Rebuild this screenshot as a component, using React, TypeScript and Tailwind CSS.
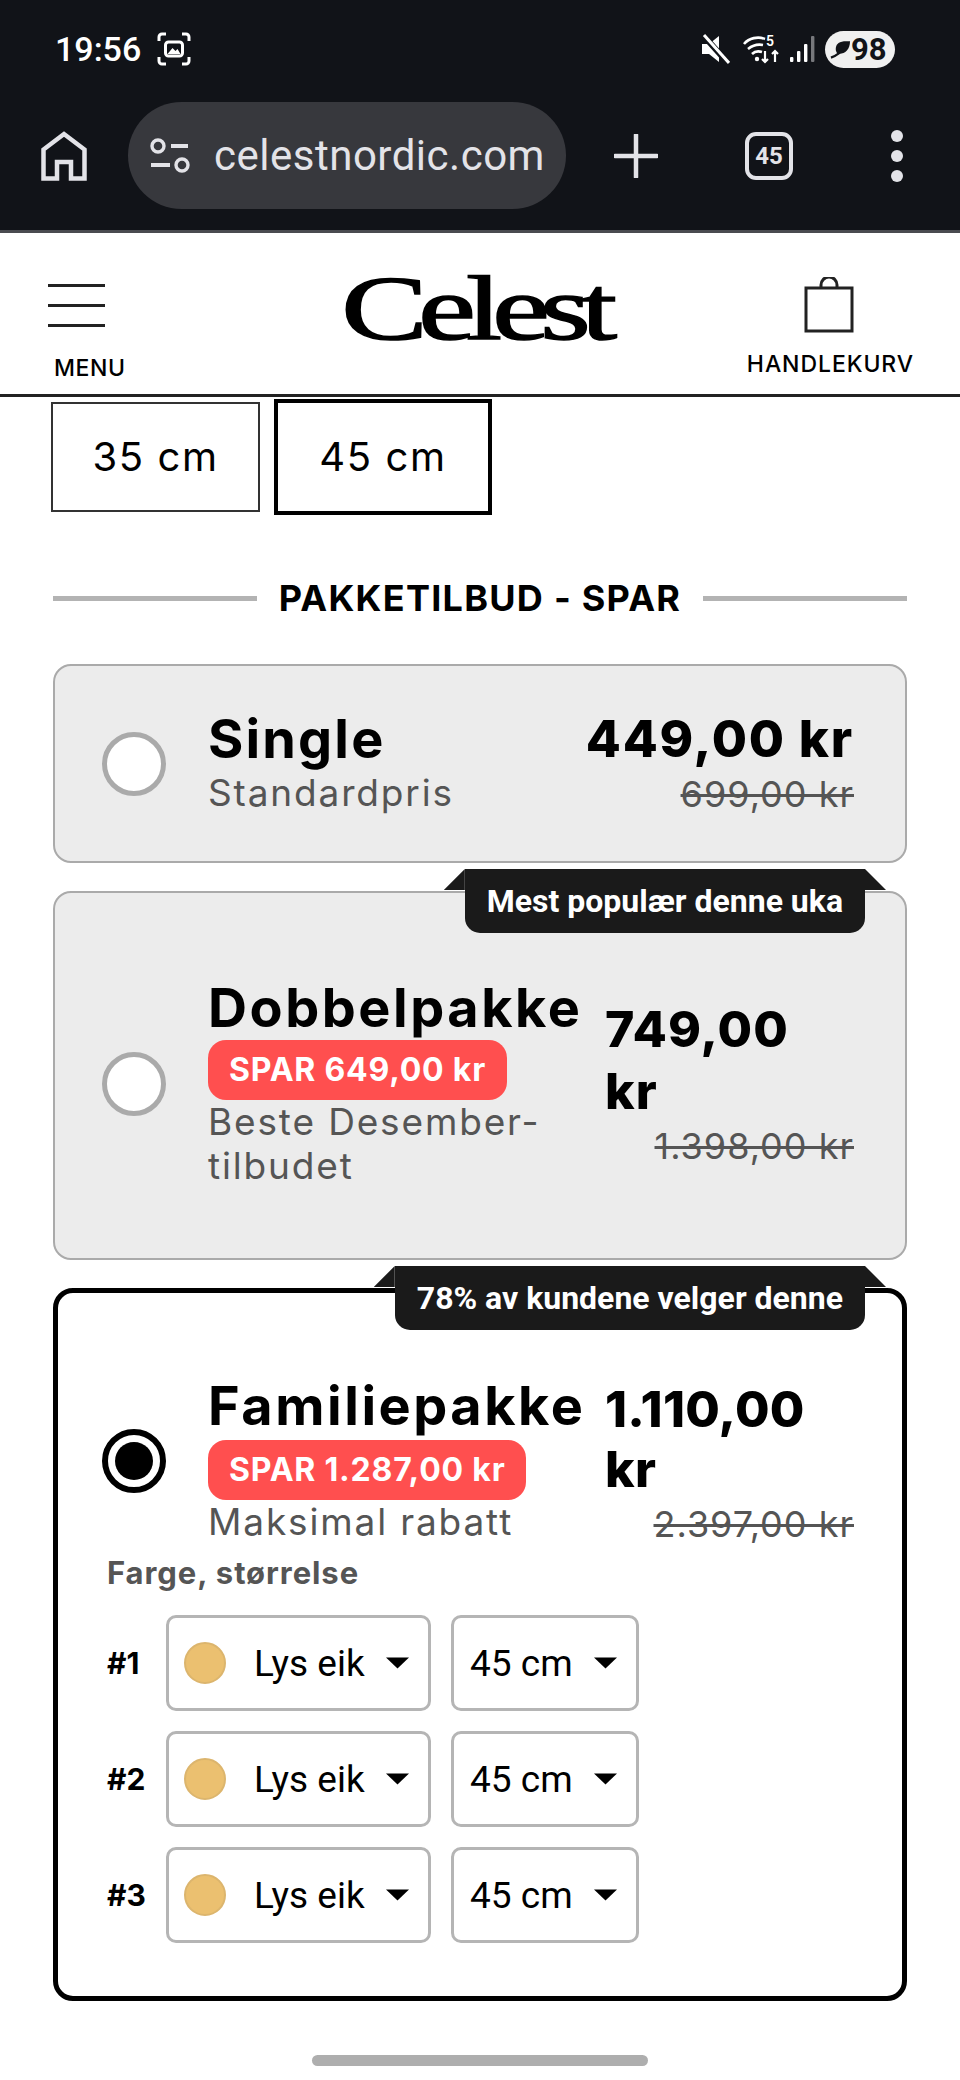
import React from "react";

const heading = "font-['Inter','Liberation_Sans',sans-serif]";

function Arrow() {
  return (
    <svg width="23" height="12" viewBox="0 0 23 12" className="shrink-0">
      <path d="M0 0.5h23L11.5 11.5z" fill="#000" />
    </svg>
  );
}

function Radio({ selected }: { selected?: boolean }) {
  return selected ? (
    <div className="w-[64px] h-[64px] shrink-0 rounded-full border-[6px] border-black bg-white flex items-center justify-center">
      <div className="w-[38px] h-[38px] rounded-full bg-black" />
    </div>
  ) : (
    <div className="w-[64px] h-[64px] shrink-0 rounded-full border-[5px] border-[#aaaaaa] bg-white" />
  );
}

function Badge({ text, pos }: { text: string; pos: string }) {
  return (
    <div className={`absolute ${pos} h-[64px] bg-[#1a1a1a] rounded-b-[15px] px-[22px] flex items-center`}>
      <div className="absolute top-0 left-[-21px] w-[21px] h-[21px] bg-[#1a1a1a] [clip-path:polygon(100%_0,0_100%,100%_100%)]" />
      <div className="absolute top-0 right-[-21px] w-[21px] h-[21px] bg-[#1a1a1a] [clip-path:polygon(0_0,0_100%,100%_100%)]" />
      <span className="font-['Roboto',sans-serif] font-bold text-[32px] leading-none text-white whitespace-nowrap">{text}</span>
    </div>
  );
}

function Pill({ text }: { text: string }) {
  return (
    <div className={`self-start h-[60px] bg-[#ff4f4f] rounded-[18px] px-[21px] flex items-center ${heading} font-bold text-[32px] tracking-[0.025em] text-white whitespace-nowrap`}>
      {text}
    </div>
  );
}

function Old({ text }: { text: string }) {
  return (
    <div className={`${heading} text-[36px] leading-[40px] tracking-[0.028em] text-right text-[#555555] line-through whitespace-nowrap`}>{text}</div>
  );
}

function Row({ n }: { n: number }) {
  return (
    <div className="flex items-center">
      <div className="w-[59px] font-['Inter',sans-serif] font-bold text-[30px] text-black">#{n}</div>
      <div className="w-[265px] h-[96px] border-[3px] border-[#b5b5b5] rounded-[10px] flex items-center pl-[15px] pr-[19px]">
        <div className="w-[42px] h-[42px] rounded-full bg-[#ebc070] border-2 border-[#dcb56d] shrink-0" />
        <span className="ml-[28px] font-['Roboto',sans-serif] text-[37px] leading-none text-black">Lys eik</span>
        <span className="ml-auto"><Arrow /></span>
      </div>
      <div className="ml-[20px] w-[188px] h-[96px] border-[3px] border-[#b5b5b5] rounded-[10px] flex items-center pl-[16px] pr-[19px]">
        <span className="font-['Roboto',sans-serif] text-[37px] leading-none text-black">45 cm</span>
        <span className="ml-auto"><Arrow /></span>
      </div>
    </div>
  );
}

export default function App() {
  return (
    <div className="w-[960px] h-[2080px] bg-white overflow-hidden flex flex-col">
      {/* Browser chrome */}
      <div className="h-[233px] bg-[#111318] border-b-[3px] border-[#4a4b50] flex flex-col shrink-0">
        <div className="h-[50px] mt-[24px] pl-[55px] pr-[65px] flex items-center text-white">
          <span className="font-['Roboto',sans-serif] font-medium text-[34px] leading-none">19:56</span>
          <svg width="34" height="34" viewBox="0 0 34 34" fill="none" className="ml-[16px]">
            <path d="M9 2H5a3 3 0 0 0-3 3v4M25 2h4a3 3 0 0 1 3 3v4M9 32H5a3 3 0 0 1-3-3v-4M25 32h4a3 3 0 0 0 3-3v-4" stroke="#fff" strokeWidth="3" />
            <rect x="8.500" y="10" width="17" height="14" rx="3" stroke="#fff" strokeWidth="3" />
            <path d="M10.500 22l5-6 3 3 2-2 3 5z" fill="#fff" />
          </svg>
          <div className="ml-auto flex items-center">
            <svg width="28" height="30" viewBox="0 0 28 30">
              <path d="M0 10h7l10-8v26l-10-8H0z" fill="#fff" />
              <path d="M1 1l25 28" stroke="#111318" strokeWidth="6" />
              <path d="M2 1l25 28" stroke="#fff" strokeWidth="3" />
            </svg>
            <svg width="38" height="32" viewBox="0 0 38 32" fill="none" className="ml-[13px]">
              <path d="M1 11C6 5 15 3 22 6M5 16c5-4 10-5 15-4M9 21c3-3 7-3 10-2" stroke="#fff" strokeWidth="2.600" />
              <circle cx="14" cy="26" r="2.200" fill="#fff" />
              <path d="M22 18v11m-3-3l3 3 3-3M32 29V18m-3 3l3-3 3 3" stroke="#fff" strokeWidth="2.200" />
              <text x="23" y="13" fontSize="14" fontWeight="600" fill="#fff" fontFamily="Roboto, sans-serif">5</text>
            </svg>
            <svg width="26" height="28" viewBox="0 0 26 28" className="ml-[8px]">
              <rect x="1" y="22" width="3.400" height="5" rx="1" fill="#fff" />
              <rect x="8" y="16" width="3.400" height="11" rx="1" fill="#fff" />
              <rect x="15" y="9" width="3.400" height="18" rx="1" fill="#fff" />
              <rect x="22" y="1" width="3.400" height="26" rx="1" fill="#77787c" />
            </svg>
            <div className="ml-[10px] w-[70px] h-[37px] rounded-full bg-[#f0f0f0] flex items-center pl-[5px]">
              <svg width="21" height="22" viewBox="0 0 22 22">
                <path d="M21 3c-9-1-15 1-15 8 0 2 1 4 2 5 7 1 13-4 13-13z" fill="#111318" />
                <path d="M1 20c3-1 5-2 9-5" stroke="#111318" strokeWidth="2.400" fill="none" />
              </svg>
              <span className="font-['Roboto',sans-serif] font-bold text-[31px] leading-none text-[#111318]">98</span>
            </div>
          </div>
        </div>
        <div className="mt-[28px] h-[107px] flex items-center">
          <svg width="46" height="50" viewBox="0 0 46 50" fill="none" className="ml-[41px]">
            <path d="M2.500 47.500V18.500L23 3l20.500 15.500v29H30V31H16v16.500z" stroke="#e3e3e8" strokeWidth="4.500" strokeLinejoin="miter" />
          </svg>
          <div className="ml-[41px] w-[438px] h-[107px] rounded-full bg-[#37383d] flex items-center pl-[22px]">
            <svg width="40" height="36" viewBox="0 0 40 36" fill="none">
              <circle cx="8" cy="8" r="6" stroke="#e3e3e8" strokeWidth="3.400" />
              <path d="M21 8h17M1 27h19" stroke="#e3e3e8" strokeWidth="3.800" />
              <circle cx="32" cy="27" r="6" stroke="#e3e3e8" strokeWidth="3.400" />
            </svg>
            <span className="ml-[24px] font-['Roboto',sans-serif] text-[42px] leading-none text-[#e3e3e8] tracking-[0.012em] whitespace-nowrap">celestnordic.com</span>
          </div>
          <svg width="44" height="44" viewBox="0 0 44 44" className="ml-[48px]">
            <path d="M22 1v42M1 22h42" stroke="#e3e3e8" strokeWidth="4.500" strokeLinecap="round" />
          </svg>
          <div className="ml-[87px] w-[48px] h-[48px] rounded-[11px] border-[4px] border-[#e3e3e8] flex items-center justify-center font-['Roboto',sans-serif] font-bold text-[24px] leading-none text-[#e3e3e8]">45</div>
          <div className="ml-[98px] flex flex-col gap-[8px]">
            <div className="w-[12px] h-[12px] rounded-full bg-[#e3e3e8]" />
            <div className="w-[12px] h-[12px] rounded-full bg-[#e3e3e8]" />
            <div className="w-[12px] h-[12px] rounded-full bg-[#e3e3e8]" />
          </div>
        </div>
      </div>

      {/* Site header */}
      <div className="h-[164px] shrink-0 border-b-[3px] border-[#222222] grid grid-cols-[1fr_270px_1fr]">
        <div className="pl-[48px] pt-[51px] flex flex-col items-start">
          <div className="w-[57px] flex flex-col gap-[17px]">
            <div className="h-[3px] bg-[#222222]" />
            <div className="h-[3px] bg-[#222222]" />
            <div className="h-[3px] bg-[#222222]" />
          </div>
          <span className={`ml-[6px] mt-[26px] ${heading} font-medium text-[23px] leading-[30px] tracking-[0.025em] text-black`}>MENU</span>
        </div>
        <div className="flex justify-center pt-[30px]">
          <span className="inline-block mr-[12px] font-['Liberation_Serif',serif] font-normal text-[92px] leading-[90px] tracking-[-0.075em] text-black origin-center scale-x-[1.41] h-[90px] [-webkit-text-stroke:1.5px_black]">Celest</span>
        </div>
        <div className="pr-[46px] pt-[44px] flex flex-col items-end">
          <svg width="50" height="56" viewBox="0 0 50 56" fill="none" className="mr-[60px]">
            <path d="M17 11V8a8 8 0 0 1 16 0v3" stroke="#222" strokeWidth="3" />
            <rect x="2" y="11" width="46" height="43" stroke="#222" strokeWidth="3" />
          </svg>
          <span className={`mt-[16px] ${heading} font-medium text-[23px] leading-[30px] text-black tracking-[0.04em] whitespace-nowrap`}>HANDLEKURV</span>
        </div>
      </div>

      <main className="flex-1 flex flex-col">
        {/* Sizes */}
        <div className="pl-[51px] flex items-center pt-[2px]">
          <div className={`w-[209px] h-[110px] border-2 border-[#333333] flex items-center justify-center ${heading} text-[40px] tracking-[0.04em] text-black`}>35 cm</div>
          <div className={`ml-[14px] w-[218px] h-[116px] border-[4px] border-black flex items-center justify-center ${heading} text-[40px] tracking-[0.04em] text-black`}>45 cm</div>
        </div>

        {/* Divider */}
        <div className="mt-[63px] px-[53px] flex items-center h-[40px]">
          <div className="flex-1 h-[5px] bg-[#b3b3b3]" />
          <span className={`mx-[22px] ${heading} font-bold text-[36px] tracking-[0.035em] leading-none text-black whitespace-nowrap`}>PAKKETILBUD - SPAR</span>
          <div className="flex-1 h-[5px] bg-[#b3b3b3]" />
        </div>

        {/* Cards */}
        <div className="mt-[46px] mx-[53px] flex flex-col">
          <div className="h-[199px] rounded-[18px] border-2 border-[#aaaaaa] bg-[#ececec] pl-[47px] pr-[51px] flex items-center">
            <Radio />
            <div className="ml-[42px] flex-1 min-w-0 flex flex-col">
              <div className={`${heading} font-bold text-[54px] leading-[52px] tracking-[0.04em] text-black`}>Single</div>
              <div className={`mt-[6px] ${heading} text-[37px] leading-[44px] tracking-[0.05em] text-[#555555]`}>Standardpris</div>
            </div>
            <div className="flex flex-col items-end">
              <div className={`${heading} font-extrabold text-[51px] leading-[52px] tracking-[0.035em] text-black whitespace-nowrap`}>449,00 kr</div>
              <div className="mt-[9px]"><Old text="699,00 kr" /></div>
            </div>
          </div>

          <div className="relative mt-[28px] rounded-[18px] border-2 border-[#aaaaaa] bg-[#ececec] pl-[47px] pr-[51px] pt-[87px] pb-[70px] flex items-center">
            <Badge text="Mest populær denne uka" pos="top-[-24px] right-[40px]" />
            <Radio />
            <div className="ml-[42px] flex-1 min-w-0 flex flex-col">
              <div className={`${heading} font-bold text-[54px] leading-[56px] tracking-[0.047em] text-black whitespace-nowrap`}>Dobbelpakke</div>
              <div className="mt-[4px] flex"><Pill text="SPAR 649,00 kr" /></div>
              <div className={`${heading} text-[37px] leading-[44px] tracking-[0.05em] text-[#555555]`}>Beste Desember-<br />tilbudet</div>
            </div>
            <div className="w-[249px] shrink-0 flex flex-col pb-[4px]">
              <div className={`${heading} font-extrabold text-[50px] leading-[62px] tracking-[0.02em] text-black`}>749,00<br />kr</div>
              <div className="mt-[4px]"><Old text="1.398,00 kr" /></div>
            </div>
          </div>

          <div className="relative mt-[28px] rounded-[20px] border-[5px] border-black bg-white pl-[44px] pr-[48px] pt-[85px] pb-[53px] flex flex-col">
            <Badge text="78% av kundene velger denne" pos="top-[-27px] right-[37px]" />
            <div className="flex items-center">
              <Radio selected />
              <div className="ml-[42px] flex-1 min-w-0 flex flex-col">
                <div className={`${heading} font-bold text-[54px] leading-[56px] tracking-[0.047em] text-black whitespace-nowrap`}>Familiepakke</div>
                <div className="mt-[6px] flex"><Pill text="SPAR 1.287,00 kr" /></div>
                <div className={`${heading} text-[37px] leading-[44px] tracking-[0.05em] text-[#555555]`}>Maksimal rabatt</div>
              </div>
              <div className="w-[249px] shrink-0 flex flex-col">
                <div className={`${heading} font-extrabold text-[50px] leading-[60px] tracking-[0.005em] text-black`}>1.110,00<br />kr</div>
                <div className="mt-[5px]"><Old text="2.397,00 kr" /></div>
              </div>
            </div>
            <div className={`mt-[11px] pl-[5px] ${heading} font-bold text-[31px] leading-[36px] tracking-[0.03em] text-[#555555]`}>Farge, størrelse</div>
            <div className="mt-[24px] pl-[5px] flex flex-col gap-[20px]">
              <Row n={1} />
              <Row n={2} />
              <Row n={3} />
            </div>
          </div>
        </div>

        {/* Gesture bar */}
        <div className="mt-[54px] self-center w-[336px] h-[11px] rounded-full bg-[#aeaeae]" />
      </main>
    </div>
  );
}
